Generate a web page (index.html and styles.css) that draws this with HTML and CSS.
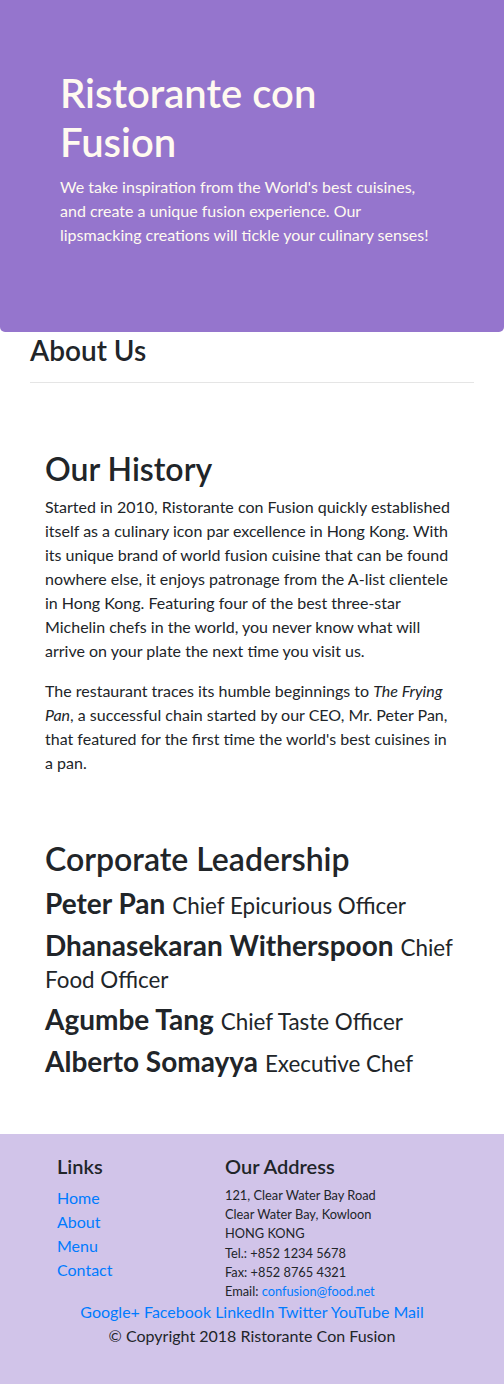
FILE: index.html
```html
<!DOCTYPE html>
<html lang="en">
<head>
<meta charset="utf-8">
<title>About Us - Ristorante con Fusion</title>
<link rel="stylesheet" href="styles.css">
</head>
<body>
<header class="jumbotron">
  <div class="jumbo-inner">
    <h1 class="jumbo-title">Ristorante con Fusion</h1>
    <p class="jumbo-text">We take inspiration from the World's best cuisines, and create a unique fusion experience. Our lipsmacking creations will tickle your culinary senses!</p>
  </div>
</header>

<main class="about">
  <div class="page-title">
    <h3 class="page-heading">About Us</h3>
    <hr class="rule">
  </div>

  <section class="history">
    <h2 class="section-heading">Our History</h2>
    <p class="history-text">Started in 2010, Ristorante con Fusion quickly established itself as a culinary icon par excellence in Hong Kong. With its unique brand of world fusion cuisine that can be found nowhere else, it enjoys patronage from the A-list clientele in Hong Kong. Featuring four of the best three-star Michelin chefs in the world, you never know what will arrive on your plate the next time you visit us.</p>
    <p class="history-text last">The restaurant traces its humble beginnings to <em>The Frying Pan</em>, a successful chain started by our CEO, Mr. Peter Pan, that featured for the first time the world's best cuisines in a pan.</p>
  </section>

  <section class="leadership">
    <h2 class="section-heading lead-heading">Corporate Leadership</h2>
    <h3 class="leader"><strong class="leader-name">Peter Pan</strong> <small class="leader-role">Chief Epicurious Officer</small></h3>
    <h3 class="leader"><strong class="leader-name">Dhanasekaran Witherspoon</strong> <small class="leader-role">Chief Food Officer</small></h3>
    <h3 class="leader"><strong class="leader-name">Agumbe Tang</strong> <small class="leader-role">Chief Taste Officer</small></h3>
    <h3 class="leader"><strong class="leader-name">Alberto Somayya</strong> <small class="leader-role">Executive Chef</small></h3>
  </section>
</main>

<footer class="footer">
  <div class="footer-cols">
    <div class="footer-links">
      <h5 class="footer-heading">Links</h5>
      <ul class="link-list">
        <li><a href="#" class="link">Home</a></li>
        <li><a href="#" class="link">About</a></li>
        <li><a href="#" class="link">Menu</a></li>
        <li><a href="#" class="link">Contact</a></li>
      </ul>
    </div>
    <div class="footer-address">
      <h5 class="footer-heading">Our Address</h5>
      <address class="address">
        121, Clear Water Bay Road<br>
        Clear Water Bay, Kowloon<br>
        HONG KONG<br>
        Tel.: +852 1234 5678<br>
        Fax: +852 8765 4321<br>
        Email: <a href="#" class="link">confusion@food.net</a>
      </address>
    </div>
  </div>
  <div class="social">
    <a href="#" class="link">Google+</a>
    <a href="#" class="link">Facebook</a>
    <a href="#" class="link">LinkedIn</a>
    <a href="#" class="link">Twitter</a>
    <a href="#" class="link">YouTube</a>
    <a href="#" class="link">Mail</a>
  </div>
  <p class="copyright">© Copyright 2018 Ristorante Con Fusion</p>
</footer>
</body>
</html>
```
FILE: styles.css
```css
* { box-sizing: border-box; }

html, body {
  margin: 0;
  padding: 0;
}

body {
  font-family: Lato, "Liberation Sans", sans-serif;
  font-size: 16px;
  line-height: 24px;
  color: #212529;
  background: #ffffff;
}

/* ---------- Jumbotron ---------- */
.jumbotron {
  background: #9575cd;
  color: #fffaf0;
  border-radius: 0 0 5px 5px;
  padding: 69px 69px 69px 60px;
}

.jumbo-title {
  margin: 0 0 8px 0;
  font-size: 40px;
  line-height: 49px;
  font-weight: 600;
}

.jumbo-text {
  margin: 0 0 16px 0;
  font-size: 16px;
  line-height: 24px;
}

/* ---------- About ---------- */
.page-title {
  padding: 2px 30px 0 30px;
}

.page-heading {
  margin: 0;
  font-size: 28px;
  line-height: 33.6px;
  font-weight: 600;
}

.rule {
  margin: 14px 0 0 0;
  border: 0;
  border-top: 1px solid rgba(0, 0, 0, 0.1);
  height: 0;
}

.history {
  padding: 67px 49px 0 45px;
}

.section-heading {
  margin: 0 0 7px 0;
  font-size: 32px;
  line-height: 38.4px;
  font-weight: 600;
}

.lead-heading {
  margin-bottom: 9px;
}

.history-text {
  margin: 0 0 16px 0;
}

.history-text.last {
  margin-bottom: 0;
}

.leadership {
  padding: 65px 45px 46.5px 45px;
}

.leader {
  margin: 0 0 10px 0;
  font-size: 28px;
  line-height: 32px;
  font-weight: 600;
}

.leader-name {
  font-weight: 700;
}

.leader-role {
  font-size: 22.4px;
  font-weight: 400;
  line-height: 1;
}

/* ---------- Footer ---------- */
.footer {
  background: #d1c4e9;
  padding: 20px 0 40px 0;
}

.footer-cols {
  display: grid;
  grid-template-columns: 168px 210px;
  margin-left: 42px;
}

.footer-links,
.footer-address {
  padding: 0 15px;
}

.footer-heading {
  margin: 0 0 8px 0;
  font-size: 20px;
  line-height: 24px;
  font-weight: 600;
}

.link-list {
  list-style: none;
  margin: 0;
  padding: 0;
}

.link {
  color: #007bff;
  text-decoration: none;
}

.address {
  font-style: normal;
  font-size: 12.8px;
  line-height: 19.2px;
  margin: 0;
}

.social {
  text-align: center;
  margin-top: -1px;
}

.copyright {
  margin: 0;
  text-align: center;
}
```
